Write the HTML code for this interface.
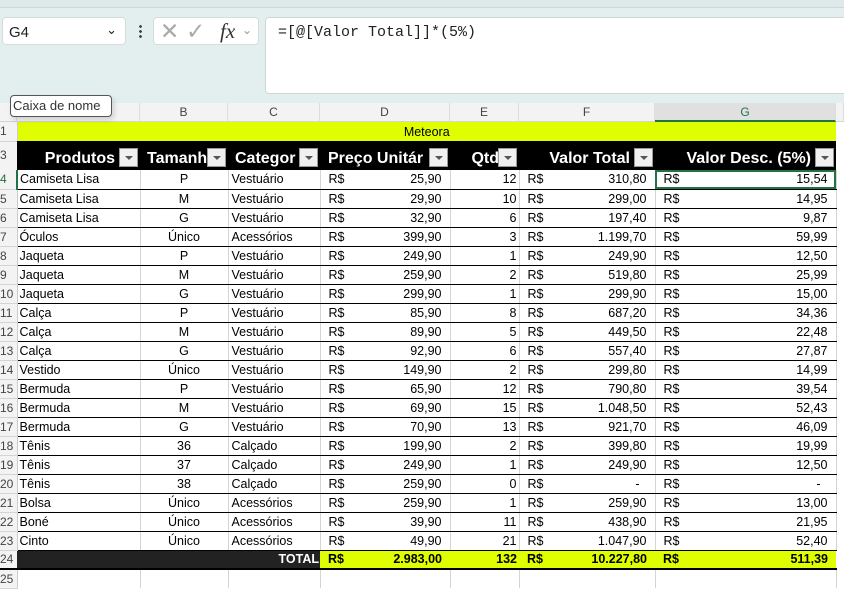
<!DOCTYPE html>
<html><head><meta charset="utf-8"><style>
body{margin:0;width:844px;height:580px;overflow:hidden;background:#fff;font-family:"Liberation Sans",sans-serif;position:relative}
.top{position:absolute;left:0;top:0;width:844px;height:103px;background:#e3efef}
.strip{position:absolute;left:0;top:0;width:844px;height:7px;background:#dde9ea;border-bottom:1px solid #cfd8d9}
.nb{position:absolute;left:2px;top:17px;width:124px;height:28px;background:#fff;border:1px solid #d6dcdc;border-radius:4px;box-sizing:border-box;font-size:15px;padding:6px 0 0 6px;color:#222}
.fxb{position:absolute;left:153px;top:17px;width:106px;height:28px;background:#fff;border:1px solid #d6dcdc;border-radius:4px;box-sizing:border-box}
.fb{position:absolute;left:265px;top:17px;width:590px;height:77px;background:#fff;border:1px solid #d0d6d6;border-radius:4px;box-sizing:border-box;font-family:"Liberation Mono",monospace;font-size:15px;padding:6px 0 0 12px;color:#222}
.tip{position:absolute;left:10px;top:95px;width:102px;height:22px;background:#fff;border:1px solid #555;border-radius:4px;box-sizing:border-box;font-size:13px;color:#333;padding:2px 0 0 2px;box-shadow:2px 3px 6px rgba(0,0,0,.15);z-index:5}
.ch{position:absolute;top:103px;height:19px;background:#f3f3f3;border-bottom:1px solid #d4d4d4;font-size:12px;color:#444;text-align:center;line-height:19px;box-sizing:border-box;border-right:1px solid #ddd}
table{position:absolute;left:0;top:122px;border-collapse:collapse;table-layout:fixed;font-size:12.5px;color:#000}
td{padding:0;height:19px;white-space:nowrap;overflow:hidden;border-right:1px solid #d4d4d4;border-bottom:1px solid #000;box-sizing:border-box}
td.r{background:#f3f3f3;color:#444;font-size:12px;text-align:left;padding-left:0;border-bottom:1px solid #d4d4d4;border-right:1px solid #ccc}
td.a{padding-left:2px}td.b{text-align:center}td.c{padding-left:3px}
.rs{padding-left:8px;position:relative}.rs span{position:absolute;right:8px}
td.e{text-align:right;padding-right:2px}
tr.h td{background:#000;color:#fff;font-weight:bold;font-size:16px;height:29px;border:none;position:relative;vertical-align:bottom;padding-bottom:2px}
tr.h td.r{background:#f3f3f3;color:#444;font-weight:normal;font-size:12px;vertical-align:middle}
.dd{position:absolute;right:2px;top:7px;width:19px;height:19px;background:#f0f0f0;border:1px solid #999;box-sizing:border-box}
.dd:after{content:"";position:absolute;left:5px;top:7px;border-left:4px solid transparent;border-right:4px solid transparent;border-top:4px solid #555}
tr.t td{font-weight:bold;background:#dfff00;border-bottom:2px solid #000;border-right:none}
</style></head><body>
<div class="top"><div class="strip"></div>
<div class="nb">G4<span style="position:absolute;right:8px;top:4px;font-size:13px">&#8964;</span></div>
<div style="position:absolute;left:139px;top:24px;width:3px;height:14px;background:radial-gradient(circle,#444 1.3px,transparent 1.5px) 0 0/3px 5px"></div>
<div class="fxb"><span style="position:absolute;left:6px;top:0px;font-size:23px;color:#aaa">&#10005;</span><span style="position:absolute;left:32px;top:0px;font-size:23px;color:#aaa">&#10003;</span><span style="position:absolute;left:66px;top:1px;font-size:21px;font-style:italic;font-family:'Liberation Serif',serif;color:#333">fx</span><span style="position:absolute;left:88px;top:5px;font-size:12px;color:#999">&#8964;</span></div>
<div class="fb">=[@[Valor Total]]*(5%)</div>
</div>
<div class="tip">Caixa de nome</div>
<div class="ch" style="left:0;width:17px"></div>
<div class="ch" style="left:17px;width:123px">A</div>
<div class="ch" style="left:140px;width:88px">B</div>
<div class="ch" style="left:228px;width:92px">C</div>
<div class="ch" style="left:320px;width:130px">D</div>
<div class="ch" style="left:450px;width:69px">E</div>
<div class="ch" style="left:519px;width:136px">F</div>
<div class="ch" style="left:655px;width:181px;background:#e0e0e0;color:#217346;border-bottom:2px solid #217346">G</div>
<div class="ch" style="left:836px;width:8px"></div>
<table>
<colgroup><col style="width:17px"><col style="width:123px"><col style="width:88px"><col style="width:92px"><col style="width:130px"><col style="width:69px"><col style="width:136px"><col style="width:181px"><col style="width:8px"></colgroup>
<tr><td class="r">1</td><td colspan="7" style="background:#dfff00;text-align:center;font-size:12.5px;border:none">Meteora</td><td style="border:none"></td></tr>
<tr class="h"><td class="r">3</td><td style="text-align:right;padding-right:25px">Produtos<div class="dd"></div></td><td style="padding-left:7px">Tamanh<div class="dd"></div></td><td style="padding-left:7px">Categor<div class="dd"></div></td><td style="padding-left:8px">Preço Unitár<div class="dd"></div></td><td style="text-align:right;padding-right:20px">Qtd<div class="dd"></div></td><td style="text-align:right;padding-right:25px">Valor Total<div class="dd"></div></td><td style="text-align:right;padding-right:25px">Valor Desc. (5%)<div class="dd"></div></td><td style="background:#fff"></td></tr>
<tr><td class="r" style="color:#217346;border-right:2px solid #217346">4</td><td class="a">Camiseta Lisa</td><td class="b">P</td><td class="c">Vestuário</td><td class="rs">R$<span>25,90</span></td><td class="e">12</td><td class="rs">R$<span>310,80</span></td><td class="rs" style="outline:2px solid #217346;outline-offset:-2px">R$<span>15,54</span></td><td style="border:none"></td></tr>
<tr><td class="r">5</td><td class="a">Camiseta Lisa</td><td class="b">M</td><td class="c">Vestuário</td><td class="rs">R$<span>29,90</span></td><td class="e">10</td><td class="rs">R$<span>299,00</span></td><td class="rs">R$<span>14,95</span></td><td style="border:none"></td></tr>
<tr><td class="r">6</td><td class="a">Camiseta Lisa</td><td class="b">G</td><td class="c">Vestuário</td><td class="rs">R$<span>32,90</span></td><td class="e">6</td><td class="rs">R$<span>197,40</span></td><td class="rs">R$<span>9,87</span></td><td style="border:none"></td></tr>
<tr><td class="r">7</td><td class="a">Óculos</td><td class="b">Único</td><td class="c">Acessórios</td><td class="rs">R$<span>399,90</span></td><td class="e">3</td><td class="rs">R$<span>1.199,70</span></td><td class="rs">R$<span>59,99</span></td><td style="border:none"></td></tr>
<tr><td class="r">8</td><td class="a">Jaqueta</td><td class="b">P</td><td class="c">Vestuário</td><td class="rs">R$<span>249,90</span></td><td class="e">1</td><td class="rs">R$<span>249,90</span></td><td class="rs">R$<span>12,50</span></td><td style="border:none"></td></tr>
<tr><td class="r">9</td><td class="a">Jaqueta</td><td class="b">M</td><td class="c">Vestuário</td><td class="rs">R$<span>259,90</span></td><td class="e">2</td><td class="rs">R$<span>519,80</span></td><td class="rs">R$<span>25,99</span></td><td style="border:none"></td></tr>
<tr><td class="r">10</td><td class="a">Jaqueta</td><td class="b">G</td><td class="c">Vestuário</td><td class="rs">R$<span>299,90</span></td><td class="e">1</td><td class="rs">R$<span>299,90</span></td><td class="rs">R$<span>15,00</span></td><td style="border:none"></td></tr>
<tr><td class="r">11</td><td class="a">Calça</td><td class="b">P</td><td class="c">Vestuário</td><td class="rs">R$<span>85,90</span></td><td class="e">8</td><td class="rs">R$<span>687,20</span></td><td class="rs">R$<span>34,36</span></td><td style="border:none"></td></tr>
<tr><td class="r">12</td><td class="a">Calça</td><td class="b">M</td><td class="c">Vestuário</td><td class="rs">R$<span>89,90</span></td><td class="e">5</td><td class="rs">R$<span>449,50</span></td><td class="rs">R$<span>22,48</span></td><td style="border:none"></td></tr>
<tr><td class="r">13</td><td class="a">Calça</td><td class="b">G</td><td class="c">Vestuário</td><td class="rs">R$<span>92,90</span></td><td class="e">6</td><td class="rs">R$<span>557,40</span></td><td class="rs">R$<span>27,87</span></td><td style="border:none"></td></tr>
<tr><td class="r">14</td><td class="a">Vestido</td><td class="b">Único</td><td class="c">Vestuário</td><td class="rs">R$<span>149,90</span></td><td class="e">2</td><td class="rs">R$<span>299,80</span></td><td class="rs">R$<span>14,99</span></td><td style="border:none"></td></tr>
<tr><td class="r">15</td><td class="a">Bermuda</td><td class="b">P</td><td class="c">Vestuário</td><td class="rs">R$<span>65,90</span></td><td class="e">12</td><td class="rs">R$<span>790,80</span></td><td class="rs">R$<span>39,54</span></td><td style="border:none"></td></tr>
<tr><td class="r">16</td><td class="a">Bermuda</td><td class="b">M</td><td class="c">Vestuário</td><td class="rs">R$<span>69,90</span></td><td class="e">15</td><td class="rs">R$<span>1.048,50</span></td><td class="rs">R$<span>52,43</span></td><td style="border:none"></td></tr>
<tr><td class="r">17</td><td class="a">Bermuda</td><td class="b">G</td><td class="c">Vestuário</td><td class="rs">R$<span>70,90</span></td><td class="e">13</td><td class="rs">R$<span>921,70</span></td><td class="rs">R$<span>46,09</span></td><td style="border:none"></td></tr>
<tr><td class="r">18</td><td class="a">Tênis</td><td class="b">36</td><td class="c">Calçado</td><td class="rs">R$<span>199,90</span></td><td class="e">2</td><td class="rs">R$<span>399,80</span></td><td class="rs">R$<span>19,99</span></td><td style="border:none"></td></tr>
<tr><td class="r">19</td><td class="a">Tênis</td><td class="b">37</td><td class="c">Calçado</td><td class="rs">R$<span>249,90</span></td><td class="e">1</td><td class="rs">R$<span>249,90</span></td><td class="rs">R$<span>12,50</span></td><td style="border:none"></td></tr>
<tr><td class="r">20</td><td class="a">Tênis</td><td class="b">38</td><td class="c">Calçado</td><td class="rs">R$<span>259,90</span></td><td class="e">0</td><td class="rs">R$<span>-&nbsp;&nbsp;</span></td><td class="rs">R$<span>-&nbsp;&nbsp;</span></td><td style="border:none"></td></tr>
<tr><td class="r">21</td><td class="a">Bolsa</td><td class="b">Único</td><td class="c">Acessórios</td><td class="rs">R$<span>259,90</span></td><td class="e">1</td><td class="rs">R$<span>259,90</span></td><td class="rs">R$<span>13,00</span></td><td style="border:none"></td></tr>
<tr><td class="r">22</td><td class="a">Boné</td><td class="b">Único</td><td class="c">Acessórios</td><td class="rs">R$<span>39,90</span></td><td class="e">11</td><td class="rs">R$<span>438,90</span></td><td class="rs">R$<span>21,95</span></td><td style="border:none"></td></tr>
<tr><td class="r">23</td><td class="a">Cinto</td><td class="b">Único</td><td class="c">Acessórios</td><td class="rs">R$<span>49,90</span></td><td class="e">21</td><td class="rs">R$<span>1.047,90</span></td><td class="rs">R$<span>52,40</span></td><td style="border:none"></td></tr>
<tr class="t"><td class="r" style="font-weight:normal;background:#f3f3f3">24</td><td style="background:#222"></td><td style="background:#222"></td><td style="background:#222"></td><td class="rs">R$<span>2.983,00</span></td><td class="e">132</td><td class="rs">R$<span>10.227,80</span></td><td class="rs">R$<span>511,39</span></td><td style="background:#fff;border:none"></td></tr>
<tr><td class="r">25</td><td style="border-bottom:none"></td><td style="border-bottom:none"></td><td style="border-bottom:none"></td><td style="border-bottom:none"></td><td style="border-bottom:none"></td><td style="border-bottom:none"></td><td style="border-bottom:none"></td><td style="border:none"></td></tr>
</table>
<div style="position:absolute;left:228px;top:550px;width:91px;height:19px;color:#fff;font-weight:bold;font-size:12.5px;text-align:right;line-height:19px">TOTAL</div>
</body></html>
